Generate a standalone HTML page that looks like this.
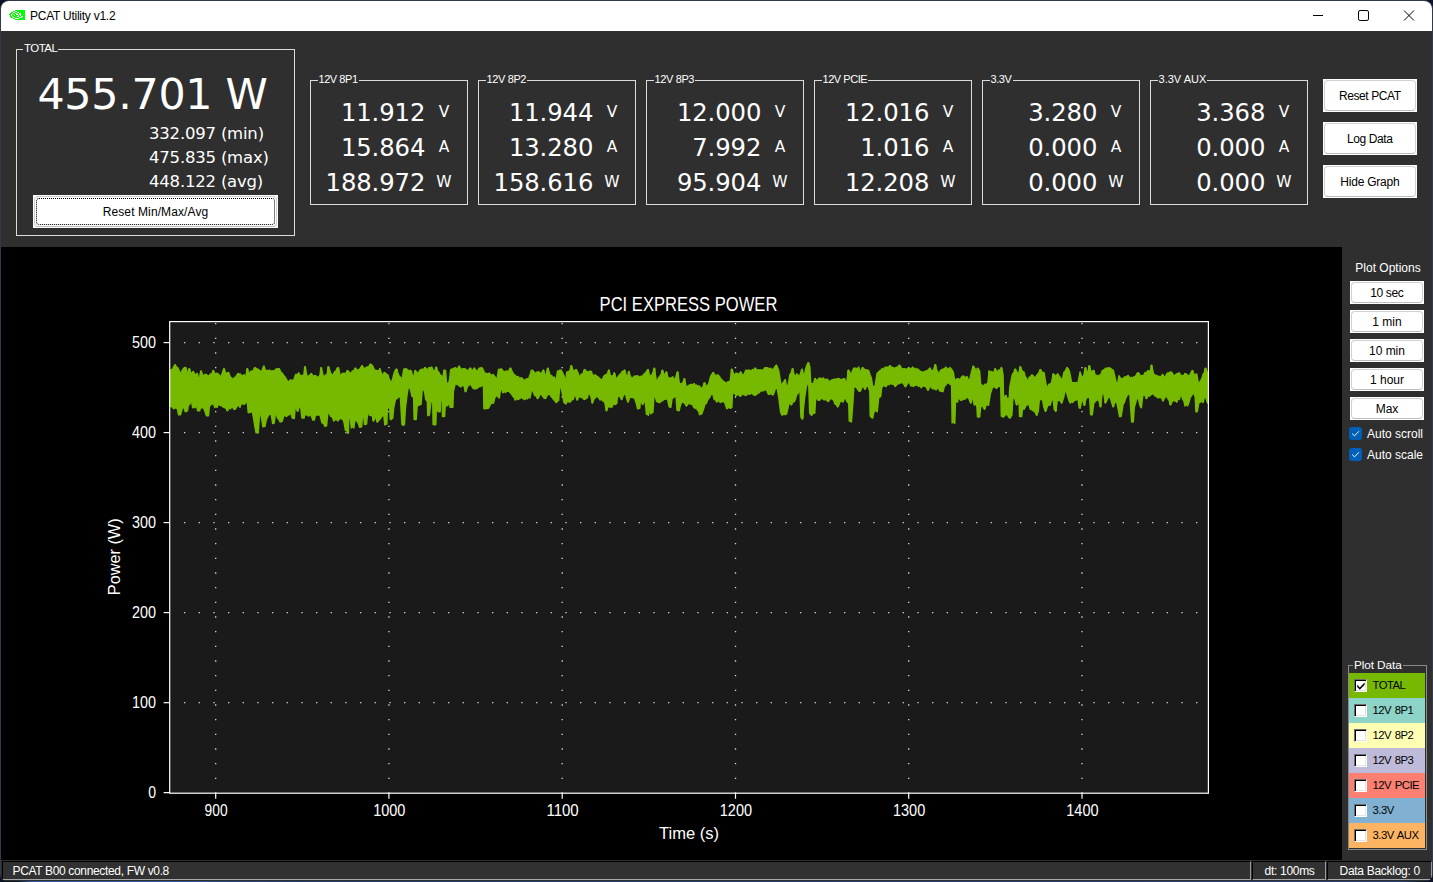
<!DOCTYPE html>
<html lang="en"><head><meta charset="utf-8"><title>PCAT Utility v1.2</title>
<style>
*{box-sizing:border-box;margin:0;padding:0}
html,body{width:1433px;height:882px;overflow:hidden;background:#0b1426}
body{position:relative;font-family:"Liberation Sans",sans-serif;font-size:12px;color:#fff}
#frame{position:absolute;left:0;top:0;width:1433px;height:881.3px;background:#323a4a;border-radius:9px 9px 7px 7px}
#win{position:absolute;left:1.2px;top:0.8px;width:1430.6px;height:880.2px;background:#2f2f2f;border-radius:8px 8px 6px 6px;overflow:hidden}
#in{position:absolute;left:-0.2px;top:0.2px;width:1431px;height:880px}
#tb{position:absolute;left:0;top:0;width:1431px;height:30px;background:#fff;color:#000}
#tb .t{position:absolute;left:29px;top:7px;font-size:12px;line-height:16px;white-space:nowrap}
.abs{position:absolute}
.gb{position:absolute;border:1px solid #dcdcdc}
.gb .lg{position:absolute;left:6.5px;top:-8.5px;height:14px;line-height:14px;font-size:11px;background:#2f2f2f;padding:0 1px;white-space:nowrap;letter-spacing:-0.3px;color:#fff}
.num{position:absolute;font-family:"DejaVu Sans",sans-serif;white-space:nowrap;text-align:right;color:#fff}
.btn{position:absolute;background:#fff;color:#000;text-align:center;white-space:nowrap;font-size:12px}
.btn i{position:absolute;left:1px;top:1px;right:1px;bottom:1px;border:1px solid #d0d0d0;border-bottom-color:#bdbdbd;border-radius:4px;display:block}
.btn span{position:relative}
#plotbg{position:absolute;left:0;top:246px;width:1341px;height:613px;background:#000}
.cb{position:absolute;width:13px;height:13px;background:#005fb8;border-radius:3px}
.row{position:absolute;left:1348px;width:76px;height:25px;color:#000;font-size:11.3px;letter-spacing:-0.5px}
.row b{position:absolute;left:5px;top:6px;width:13px;height:13px;background:#fff;border:1px solid;border-color:#6d6d6d #fff #fff #6d6d6d;box-shadow:inset 1px 1px 0 #000,inset -1px -1px 0 #e3e3e3}
.row span{word-spacing:1px;position:absolute;left:23.5px;top:5.5px;line-height:14px;font-weight:normal;white-space:nowrap}
#sb{position:absolute;left:0;top:859px;width:1431px;height:21px;background:#2f2f2f}
#sb div{position:absolute;top:1px;height:19px;line-height:16px;font-size:12px;white-space:nowrap;color:#fff;background:#313131;border:1px solid #000;border-right-color:#9a9a9a;border-bottom-color:#a8a8a8;padding-top:1px}
</style></head>
<body>
<div id="frame"></div><div style="position:absolute;left:0;top:881px;width:1433px;height:1px;background:linear-gradient(90deg,#0b1426 0,#0b1426 18px,#2b5aa0 30px,#2b5aa0 160px,#1f3f74 300px,#24467c 1400px,#0b1426 1425px)"></div>
<div id="win"><div id="in">
<div id="tb">
<svg class="abs" style="left:8px;top:9px" width="16" height="10" viewBox="0 0 16 10" fill="#00ff00" shape-rendering="crispEdges"><rect x="6" y="0" width="10" height="1"/><rect x="4" y="1" width="2" height="1"/><rect x="8" y="1" width="8" height="1"/><rect x="2" y="2" width="2" height="1"/><rect x="6" y="2" width="2" height="1"/><rect x="10" y="2" width="6" height="1"/><rect x="1" y="3" width="2" height="1"/><rect x="4" y="3" width="2" height="1"/><rect x="8" y="3" width="2" height="1"/><rect x="12" y="3" width="4" height="1"/><rect x="0" y="4" width="2" height="1"/><rect x="3" y="4" width="1" height="1"/><rect x="5" y="4" width="2" height="1"/><rect x="9" y="4" width="1" height="1"/><rect x="12" y="4" width="4" height="1"/><rect x="1" y="5" width="1" height="1"/><rect x="3" y="5" width="2" height="1"/><rect x="6" y="5" width="3" height="1"/><rect x="10" y="5" width="1" height="1"/><rect x="12" y="5" width="4" height="1"/><rect x="1" y="6" width="2" height="1"/><rect x="4" y="6" width="4" height="1"/><rect x="10" y="6" width="2" height="1"/><rect x="14" y="6" width="2" height="1"/><rect x="2" y="7" width="2" height="1"/><rect x="6" y="7" width="4" height="1"/><rect x="13" y="7" width="3" height="1"/><rect x="4" y="8" width="2" height="1"/><rect x="10" y="8" width="6" height="1"/><rect x="6" y="9" width="10" height="1"/></svg>
<div class="t" style="letter-spacing:-0.25px">PCAT Utility v1.2</div>
<svg class="abs" style="left:1300px;top:0" width="131" height="30" viewBox="0 0 131 30" fill="none" stroke="#000" stroke-width="1"><path d="M12 14.5H22"/><rect x="57.5" y="9.5" width="10" height="10" rx="1.6"/><path d="M103 9.5L113 19.5M113 9.5L103 19.5"/></svg>
</div>
<div class="gb" style="left:15px;top:48px;width:279px;height:187px"><span class="lg" style="font-size:11.5px;left:6px;letter-spacing:-0.55px">TOTAL</span><div class="num" style="left:0;width:250.6px;top:19.3px;font-size:42.8px;line-height:50px;letter-spacing:-0.3px">455.701 W</div><div class="num" style="left:132px;text-align:left;top:74px;font-size:16.5px;line-height:20px;letter-spacing:-0.2px">332.097 (min)</div><div class="num" style="left:132px;text-align:left;top:98px;font-size:16.5px;line-height:20px;letter-spacing:-0.2px">475.835 (max)</div><div class="num" style="left:132px;text-align:left;top:122px;font-size:16.5px;line-height:20px;letter-spacing:-0.2px">448.122 (avg)</div></div>
<div class="btn" style="left:32px;top:194px;width:245px;height:33px;line-height:33px"><i></i><i style="left:3px;top:3px;right:3px;bottom:3px;border:1px dotted #000;border-radius:3px"></i><span style="top:1px;letter-spacing:0.1px">Reset Min/Max/Avg</span></div>
<div class="gb" style="left:309px;top:79px;width:158px;height:125px"><span class="lg" style="letter-spacing:-0.44px">12V 8P1</span><div class="num" style="right:41.7px;top:17.7px;font-size:24.3px;line-height:28px;letter-spacing:-0.1px">11.912</div><div class="num" style="left:118px;width:30px;text-align:center;top:21px;font-size:15.5px;line-height:20px">V</div><div class="num" style="right:41.7px;top:52.7px;font-size:24.3px;line-height:28px;letter-spacing:-0.1px">15.864</div><div class="num" style="left:118px;width:30px;text-align:center;top:56px;font-size:15.5px;line-height:20px">A</div><div class="num" style="right:41.7px;top:87.7px;font-size:24.3px;line-height:28px;letter-spacing:-0.1px">188.972</div><div class="num" style="left:118px;width:30px;text-align:center;top:91px;font-size:15.5px;line-height:20px">W</div></div>
<div class="gb" style="left:477px;top:79px;width:158px;height:125px"><span class="lg" style="letter-spacing:-0.37px">12V 8P2</span><div class="num" style="right:41.7px;top:17.7px;font-size:24.3px;line-height:28px;letter-spacing:-0.1px">11.944</div><div class="num" style="left:118px;width:30px;text-align:center;top:21px;font-size:15.5px;line-height:20px">V</div><div class="num" style="right:41.7px;top:52.7px;font-size:24.3px;line-height:28px;letter-spacing:-0.1px">13.280</div><div class="num" style="left:118px;width:30px;text-align:center;top:56px;font-size:15.5px;line-height:20px">A</div><div class="num" style="right:41.7px;top:87.7px;font-size:24.3px;line-height:28px;letter-spacing:-0.1px">158.616</div><div class="num" style="left:118px;width:30px;text-align:center;top:91px;font-size:15.5px;line-height:20px">W</div></div>
<div class="gb" style="left:645px;top:79px;width:158px;height:125px"><span class="lg" style="letter-spacing:-0.37px">12V 8P3</span><div class="num" style="right:41.7px;top:17.7px;font-size:24.3px;line-height:28px;letter-spacing:-0.1px">12.000</div><div class="num" style="left:118px;width:30px;text-align:center;top:21px;font-size:15.5px;line-height:20px">V</div><div class="num" style="right:41.7px;top:52.7px;font-size:24.3px;line-height:28px;letter-spacing:-0.1px">7.992</div><div class="num" style="left:118px;width:30px;text-align:center;top:56px;font-size:15.5px;line-height:20px">A</div><div class="num" style="right:41.7px;top:87.7px;font-size:24.3px;line-height:28px;letter-spacing:-0.1px">95.904</div><div class="num" style="left:118px;width:30px;text-align:center;top:91px;font-size:15.5px;line-height:20px">W</div></div>
<div class="gb" style="left:813px;top:79px;width:158px;height:125px"><span class="lg" style="letter-spacing:-0.46px">12V PCIE</span><div class="num" style="right:41.7px;top:17.7px;font-size:24.3px;line-height:28px;letter-spacing:-0.1px">12.016</div><div class="num" style="left:118px;width:30px;text-align:center;top:21px;font-size:15.5px;line-height:20px">V</div><div class="num" style="right:41.7px;top:52.7px;font-size:24.3px;line-height:28px;letter-spacing:-0.1px">1.016</div><div class="num" style="left:118px;width:30px;text-align:center;top:56px;font-size:15.5px;line-height:20px">A</div><div class="num" style="right:41.7px;top:87.7px;font-size:24.3px;line-height:28px;letter-spacing:-0.1px">12.208</div><div class="num" style="left:118px;width:30px;text-align:center;top:91px;font-size:15.5px;line-height:20px">W</div></div>
<div class="gb" style="left:981px;top:79px;width:158px;height:125px"><span class="lg" style="letter-spacing:-0.41px">3.3V</span><div class="num" style="right:41.7px;top:17.7px;font-size:24.3px;line-height:28px;letter-spacing:-0.1px">3.280</div><div class="num" style="left:118px;width:30px;text-align:center;top:21px;font-size:15.5px;line-height:20px">V</div><div class="num" style="right:41.7px;top:52.7px;font-size:24.3px;line-height:28px;letter-spacing:-0.1px">0.000</div><div class="num" style="left:118px;width:30px;text-align:center;top:56px;font-size:15.5px;line-height:20px">A</div><div class="num" style="right:41.7px;top:87.7px;font-size:24.3px;line-height:28px;letter-spacing:-0.1px">0.000</div><div class="num" style="left:118px;width:30px;text-align:center;top:91px;font-size:15.5px;line-height:20px">W</div></div>
<div class="gb" style="left:1149px;top:79px;width:158px;height:125px"><span class="lg" style="letter-spacing:0.02px">3.3V AUX</span><div class="num" style="right:41.7px;top:17.7px;font-size:24.3px;line-height:28px;letter-spacing:-0.1px">3.368</div><div class="num" style="left:118px;width:30px;text-align:center;top:21px;font-size:15.5px;line-height:20px">V</div><div class="num" style="right:41.7px;top:52.7px;font-size:24.3px;line-height:28px;letter-spacing:-0.1px">0.000</div><div class="num" style="left:118px;width:30px;text-align:center;top:56px;font-size:15.5px;line-height:20px">A</div><div class="num" style="right:41.7px;top:87.7px;font-size:24.3px;line-height:28px;letter-spacing:-0.1px">0.000</div><div class="num" style="left:118px;width:30px;text-align:center;top:91px;font-size:15.5px;line-height:20px">W</div></div>
<div class="btn" style="left:1322px;top:78px;width:94px;height:33px;line-height:33px;font-size:12px"><i></i><span style="letter-spacing:-0.4px;margin-right:0.4px;top:1px">Reset PCAT</span></div>
<div class="btn" style="left:1322px;top:121px;width:94px;height:33px;line-height:33px;font-size:12px"><i></i><span style="letter-spacing:-0.39px;margin-right:0.39px;top:1px">Log Data</span></div>
<div class="btn" style="left:1322px;top:164px;width:94px;height:33px;line-height:33px;font-size:12px"><i></i><span style="letter-spacing:-0.23px;margin-right:0.23px;top:1px">Hide Graph</span></div>
<div id="plotbg"></div>
<svg class="abs" style="left:-1px;top:-1px" width="1433" height="882" viewBox="0 0 1433 882" font-family="'Liberation Sans',sans-serif" fill="#fff"><rect x="169.5" y="321.5" width="1039" height="471.7" fill="#1a1a1a"/><g stroke="#d8d8d8" stroke-width="1.3" stroke-dasharray="1.3 13.367" fill="none"><path d="M184.0 702.7H1208"/><path d="M184.0 612.6H1208"/><path d="M184.0 522.6H1208"/><path d="M184.0 432.6H1208"/><path d="M184.0 342.6H1208"/><path d="M215.7 323V793"/><path d="M388.9 323V793"/><path d="M562.2 323V793"/><path d="M735.5 323V793"/><path d="M908.7 323V793"/><path d="M1082.0 323V793"/></g><path d="M170.3,370.2 L170.3,370.2 L171.5,369.7 L172.7,369.2 L173.9,366.5 L175.1,364.8 L176.4,367.2 L177.6,367.7 L178.8,369.9 L180.0,373.6 L181.2,372.5 L182.3,370.4 L183.4,368.7 L184.7,367.5 L185.9,367.7 L187.4,374.6 L189.3,368.7 L191.3,374.6 L193.2,371.6 L195.2,375.5 L197.1,373.6 L198.6,380.4 L199.8,376.3 L201.0,371.1 L203.0,376.5 L204.9,374.6 L206.4,374.5 L207.9,376.0 L209.2,375.7 L210.5,374.0 L211.8,374.1 L213.2,370.6 L215.2,374.6 L216.4,373.4 L217.6,373.6 L218.9,374.7 L220.2,376.6 L221.5,376.0 L222.8,371.8 L224.0,368.7 L225.9,374.1 L227.2,373.1 L228.4,372.6 L230.3,377.0 L231.6,378.2 L232.9,379.4 L234.2,378.0 L235.6,377.2 L236.9,375.3 L238.2,373.6 L240.1,376.5 L240.0,374.1 L242.0,376.5 L243.9,375.0 L245.4,378.9 L247.3,368.7 L248.5,372.7 L249.8,373.1 L251.0,371.3 L252.2,371.1 L253.4,370.9 L254.7,367.7 L256.1,368.4 L257.6,369.2 L258.7,369.8 L259.9,370.9 L261.0,372.6 L262.5,369.4 L263.9,366.2 L265.2,370.1 L266.4,371.1 L267.5,370.4 L268.7,371.2 L269.8,370.2 L270.9,371.4 L272.1,370.9 L273.2,371.1 L274.4,371.3 L275.6,369.4 L276.7,368.9 L277.9,368.9 L279.1,368.7 L280.5,371.9 L282.0,373.1 L283.5,375.3 L284.9,377.0 L286.4,379.4 L287.9,381.9 L289.1,381.6 L290.3,379.9 L291.5,380.5 L292.6,380.2 L293.7,380.4 L295.7,374.6 L297.2,375.1 L298.6,373.1 L300.1,375.6 L301.5,376.0 L302.8,375.3 L304.0,375.0 L305.0,366.7 L306.9,376.5 L308.4,376.2 L309.9,375.1 L311.3,373.6 L312.6,375.8 L313.9,376.0 L315.2,375.5 L316.7,376.7 L318.2,378.0 L320.1,375.0 L321.1,367.7 L323.0,375.5 L324.3,377.4 L325.6,375.0 L327.0,375.5 L328.4,366.7 L330.4,372.6 L332.3,376.0 L333.5,374.1 L334.8,371.6 L335.9,371.5 L337.0,368.5 L338.2,367.7 L340.1,375.5 L341.3,375.3 L342.4,373.4 L343.6,373.6 L344.9,373.6 L346.2,372.9 L347.5,370.6 L348.8,372.0 L350.1,373.5 L351.4,372.6 L352.7,371.1 L354.0,370.7 L355.3,368.2 L356.7,369.9 L358.2,370.2 L359.5,369.4 L360.8,367.6 L362.1,365.8 L363.4,367.9 L364.7,368.8 L366.0,367.7 L367.5,367.0 L369.0,366.4 L370.4,364.3 L371.6,364.8 L372.9,366.7 L374.3,369.8 L375.8,370.6 L377.2,370.9 L378.6,371.2 L380.0,368.7 L380.0,369.2 L382.0,375.0 L383.2,375.2 L384.4,372.6 L385.5,373.3 L386.7,374.4 L387.8,375.0 L389.8,380.9 L391.0,381.9 L392.2,380.9 L394.2,373.1 L395.4,370.3 L396.6,369.2 L397.8,373.0 L399.1,376.0 L400.5,377.5 L402.0,379.9 L403.9,369.2 L405.2,368.9 L406.5,369.1 L407.8,370.2 L409.0,371.7 L410.1,370.3 L411.3,371.1 L413.2,378.9 L415.2,370.6 L416.4,372.1 L417.6,374.1 L418.8,372.3 L420.1,370.2 L422.0,369.2 L423.5,370.0 L424.9,367.7 L426.2,368.7 L427.4,371.1 L428.8,367.7 L430.3,367.8 L431.8,367.2 L433.7,372.1 L435.0,370.3 L436.2,367.2 L437.4,371.2 L438.6,372.1 L440.1,375.2 L441.5,375.5 L442.5,383.8 L444.0,370.2 L445.5,370.6 L446.4,382.9 L447.9,383.6 L449.4,381.4 L450.8,369.7 L452.0,369.1 L453.1,369.0 L454.2,368.2 L455.5,367.8 L456.7,368.8 L457.9,368.5 L459.1,366.2 L461.1,370.2 L462.6,368.9 L464.0,368.7 L465.3,369.1 L466.6,370.1 L467.9,371.1 L469.1,369.4 L470.4,368.2 L472.3,371.1 L474.3,368.2 L475.5,370.1 L476.7,371.1 L477.9,370.4 L479.2,368.2 L480.3,368.2 L481.4,367.6 L482.6,368.7 L483.8,371.4 L485.0,373.6 L486.5,373.5 L488.0,373.9 L489.4,373.1 L490.7,375.3 L492.0,375.1 L493.3,374.6 L494.6,376.6 L495.9,378.3 L497.2,378.9 L498.7,369.2 L499.8,370.3 L501.0,368.8 L502.1,369.7 L503.4,371.8 L504.7,371.9 L506.0,371.1 L507.5,371.7 L509.0,370.5 L510.4,368.2 L511.6,370.5 L512.7,372.7 L513.8,374.6 L515.1,375.2 L516.3,377.0 L518.2,376.5 L520.0,380.9 L520.0,378.0 L522.0,378.0 L523.4,380.1 L524.9,380.4 L526.2,379.2 L527.5,378.7 L528.8,378.9 L530.3,374.2 L531.7,370.2 L533.0,370.8 L534.3,372.5 L535.6,373.6 L537.1,372.1 L538.6,372.1 L539.8,372.7 L541.0,375.0 L542.2,372.1 L543.4,370.2 L545.4,378.0 L546.6,372.5 L547.8,368.2 L549.1,372.2 L550.3,376.0 L551.6,375.5 L552.9,378.2 L554.2,377.0 L555.7,382.9 L557.6,371.1 L558.8,371.6 L559.9,370.0 L561.0,370.2 L562.5,372.9 L564.0,376.0 L565.4,383.8 L566.9,372.1 L568.4,371.7 L569.8,371.1 L571.3,365.8 L573.2,371.1 L574.7,370.5 L576.2,369.7 L577.6,372.3 L579.1,376.0 L580.3,376.5 L581.5,374.1 L583.0,373.7 L584.5,369.7 L585.8,370.9 L587.1,371.7 L588.4,372.1 L589.9,371.2 L591.3,371.6 L592.8,376.5 L594.0,375.2 L595.2,375.0 L596.5,376.1 L597.8,376.8 L599.1,378.0 L601.1,379.9 L602.6,379.4 L604.0,376.0 L605.5,374.8 L607.0,374.6 L608.9,370.2 L610.9,378.5 L612.0,375.8 L613.1,376.6 L614.3,373.1 L615.5,377.1 L616.7,379.9 L618.2,376.7 L619.7,374.6 L620.9,374.1 L622.1,371.5 L623.3,371.8 L624.5,370.2 L626.5,376.5 L627.7,375.9 L628.9,371.6 L630.2,376.3 L631.4,378.0 L632.7,378.4 L634.0,376.5 L635.3,376.0 L636.5,376.3 L637.7,375.8 L638.9,377.6 L640.2,376.5 L641.4,376.4 L642.6,376.3 L643.8,374.3 L645.1,373.6 L646.5,371.3 L648.0,369.7 L649.2,374.5 L650.4,376.5 L651.7,375.6 L653.0,372.5 L654.3,368.2 L656.3,381.4 L657.5,380.8 L658.7,377.5 L660.0,377.0 L660.0,376.0 L661.2,374.5 L662.4,370.2 L664.4,376.0 L666.4,372.1 L667.6,376.7 L668.8,378.9 L670.1,378.0 L671.4,378.2 L672.7,377.0 L674.7,380.9 L676.1,376.6 L677.6,372.1 L679.5,384.8 L681.0,383.5 L682.5,383.8 L684.4,378.9 L686.4,388.7 L687.8,386.2 L689.3,385.3 L690.5,384.8 L691.8,384.4 L693.0,385.2 L694.2,383.8 L695.4,386.1 L696.6,385.2 L697.9,387.0 L699.1,385.8 L700.4,388.0 L701.7,388.2 L703.0,386.8 L704.5,382.9 L706.4,386.8 L707.6,385.4 L708.8,383.8 L710.8,376.5 L712.0,374.3 L713.2,372.6 L715.2,376.0 L716.7,375.3 L718.1,375.0 L719.6,376.9 L721.1,379.4 L722.2,379.9 L723.3,381.9 L724.5,381.9 L725.7,383.3 L726.8,382.9 L728.0,381.7 L729.2,382.0 L730.3,380.9 L731.8,369.2 L733.8,374.6 L734.9,375.6 L736.0,373.2 L737.2,373.6 L738.3,374.0 L739.5,374.2 L740.6,372.1 L741.7,374.2 L742.9,374.9 L744.0,374.6 L746.0,370.2 L747.3,370.8 L748.6,370.1 L749.9,370.6 L751.2,371.3 L752.6,369.5 L753.9,370.2 L755.3,368.2 L756.7,370.7 L758.2,369.7 L759.7,370.2 L761.0,369.8 L762.3,370.7 L763.7,369.5 L765.0,367.7 L766.5,367.8 L768.0,368.1 L769.4,369.2 L770.6,368.3 L771.9,370.1 L773.1,369.4 L774.3,367.7 L776.3,365.3 L777.5,367.7 L778.7,371.1 L780.7,383.8 L781.9,384.8 L783.1,382.9 L785.1,379.9 L787.0,388.7 L788.5,383.7 L789.9,375.0 L791.3,372.8 L792.6,368.7 L793.7,373.4 L794.8,378.0 L796.8,374.1 L798.4,375.7 L800.0,376.0 L800.0,375.0 L802.0,369.2 L803.9,378.0 L805.9,368.2 L807.1,365.0 L808.3,362.8 L809.8,367.2 L810.7,383.8 L812.0,383.5 L813.2,384.8 L815.1,378.5 L816.4,381.0 L817.6,379.9 L819.5,378.0 L820.8,378.9 L822.1,378.5 L823.4,378.0 L824.7,380.2 L826.1,379.3 L827.4,379.4 L828.7,381.3 L830.0,381.5 L831.3,380.4 L832.4,379.8 L833.5,379.6 L834.7,379.4 L835.8,378.9 L837.0,379.5 L838.1,378.5 L839.4,378.8 L840.7,379.7 L842.0,379.9 L843.2,378.9 L844.5,378.9 L845.7,382.1 L846.9,381.9 L848.4,370.2 L849.8,372.1 L850.3,384.8 L851.3,374.1 L852.5,371.2 L853.7,368.2 L855.0,368.3 L856.2,368.4 L857.4,369.1 L858.6,367.2 L860.6,373.1 L862.5,367.7 L863.7,368.5 L864.9,370.4 L866.0,369.7 L867.2,370.3 L868.4,370.2 L869.9,374.6 L871.3,378.0 L872.8,388.7 L874.0,386.4 L875.2,385.8 L877.2,373.1 L878.5,372.4 L879.8,370.7 L881.1,370.2 L882.3,368.5 L883.5,370.0 L884.8,367.5 L886.0,367.2 L887.3,367.2 L888.6,367.4 L889.9,365.8 L891.2,367.2 L892.5,367.4 L893.8,368.2 L895.1,368.0 L896.5,367.4 L897.8,367.3 L899.2,365.3 L900.3,366.0 L901.4,368.5 L902.6,369.2 L903.8,368.8 L904.9,368.7 L906.1,369.9 L907.3,368.9 L908.4,368.2 L909.9,368.5 L911.4,368.8 L912.8,367.2 L914.2,369.4 L915.5,368.5 L916.9,369.5 L918.2,369.2 L919.4,370.9 L920.7,371.6 L922.0,372.0 L923.3,372.4 L924.7,371.6 L926.0,371.1 L927.3,370.7 L928.6,369.6 L929.9,368.2 L931.1,370.6 L932.2,370.6 L933.4,370.2 L935.3,364.8 L936.5,370.0 L937.8,372.1 L938.9,374.6 L940.0,373.6 L940.0,371.1 L941.5,370.0 L942.9,369.2 L944.4,368.9 L945.9,367.2 L947.2,369.1 L948.5,369.0 L949.8,367.7 L950.9,368.7 L952.0,370.1 L953.2,372.1 L954.5,379.9 L955.8,379.8 L957.1,378.9 L958.3,378.7 L959.5,379.9 L960.8,378.4 L962.1,376.6 L963.4,376.0 L964.6,377.2 L965.7,377.6 L966.9,376.5 L968.8,381.4 L970.0,378.8 L971.3,373.1 L973.2,366.2 L975.2,369.2 L976.1,375.0 L977.6,368.2 L979.6,371.1 L980.5,383.8 L981.8,385.1 L983.0,387.3 L984.9,384.3 L986.4,384.7 L987.9,382.9 L989.3,371.1 L990.5,372.6 L991.6,371.6 L992.8,372.6 L994.0,372.2 L995.2,368.7 L996.4,372.0 L997.6,371.6 L998.9,370.0 L1000.1,370.8 L1001.4,367.7 L1003.0,375.0 L1003.5,401.4 L1005.7,395.6 L1007.4,399.5 L1009.4,397.5 L1009.9,386.8 L1011.1,381.1 L1012.3,375.0 L1013.8,372.6 L1015.2,369.2 L1017.2,372.6 L1018.2,376.5 L1020.3,366.7 L1022.1,371.1 L1024.0,372.1 L1025.2,376.9 L1026.5,378.0 L1027.7,384.3 L1029.4,377.0 L1030.6,377.4 L1031.8,375.0 L1033.0,375.6 L1034.1,377.3 L1035.3,378.0 L1037.2,375.0 L1038.8,372.9 L1040.4,369.7 L1042.6,373.1 L1044.0,372.6 L1046.0,384.8 L1047.0,389.2 L1048.9,384.3 L1050.2,383.9 L1051.4,383.3 L1053.3,374.1 L1054.5,374.9 L1055.8,376.5 L1057.7,374.1 L1059.2,376.3 L1060.7,378.5 L1062.1,380.9 L1064.1,372.1 L1065.5,371.0 L1067.0,367.7 L1068.2,368.8 L1069.4,371.6 L1071.4,381.9 L1072.5,382.9 L1073.7,382.9 L1074.8,382.9 L1076.3,382.5 L1077.8,383.8 L1078.9,378.5 L1080.0,373.1 L1080.0,372.1 L1081.5,376.4 L1082.9,378.9 L1084.2,373.9 L1085.4,367.7 L1087.3,375.0 L1089.3,365.8 L1091.2,373.1 L1092.5,371.1 L1093.7,370.6 L1095.1,374.9 L1096.6,375.5 L1098.1,376.6 L1099.5,375.0 L1100.8,375.2 L1102.1,371.2 L1103.4,370.2 L1104.7,369.4 L1105.9,368.1 L1107.1,369.6 L1108.3,367.7 L1109.6,368.2 L1110.8,368.4 L1112.0,369.8 L1113.2,370.2 L1115.2,378.5 L1117.1,386.8 L1119.1,376.0 L1120.4,378.5 L1121.7,379.0 L1123.0,378.5 L1124.2,377.6 L1125.4,376.5 L1126.7,377.9 L1127.9,375.5 L1129.1,377.1 L1130.3,378.3 L1131.5,377.4 L1132.8,378.9 L1134.0,376.7 L1135.2,377.0 L1136.4,374.8 L1137.6,373.1 L1138.9,373.0 L1140.1,376.0 L1141.3,375.8 L1142.5,375.5 L1143.7,375.8 L1145.0,372.7 L1146.2,373.7 L1147.4,371.1 L1148.9,370.9 L1150.3,372.1 L1151.5,365.3 L1153.3,373.1 L1154.5,375.5 L1155.7,375.2 L1156.9,375.7 L1158.2,376.5 L1159.6,376.5 L1161.1,376.9 L1162.6,374.6 L1163.8,376.4 L1165.0,378.5 L1166.2,375.2 L1167.4,373.1 L1168.7,373.3 L1170.0,372.2 L1171.3,372.1 L1172.6,373.7 L1173.8,376.5 L1175.1,375.2 L1176.5,374.0 L1177.8,373.6 L1179.2,373.1 L1180.4,374.8 L1181.6,376.5 L1182.7,375.5 L1183.9,375.8 L1185.0,373.6 L1186.5,374.3 L1188.0,375.7 L1189.4,376.0 L1190.9,372.9 L1192.4,370.6 L1194.3,375.0 L1195.5,374.6 L1196.7,374.1 L1198.7,385.8 L1199.8,382.3 L1201.0,380.4 L1202.1,378.0 L1203.3,373.9 L1204.4,372.6 L1205.5,368.2 L1207.5,373.1 L1207.9,373.1 L1207.9,402.9 L1207.5,402.9 L1206.0,397.7 L1204.6,395.5 L1203.1,402.4 L1201.6,400.9 L1200.2,402.1 L1198.7,402.9 L1197.2,411.7 L1196.0,411.7 L1195.3,397.5 L1193.8,391.1 L1192.6,394.2 L1191.4,395.5 L1190.1,397.7 L1188.8,402.6 L1187.5,405.8 L1186.2,404.3 L1185.0,405.8 L1183.9,400.7 L1182.7,399.1 L1181.6,395.0 L1180.4,395.6 L1179.2,399.4 L1177.9,398.6 L1176.7,401.9 L1175.4,400.6 L1174.1,400.7 L1172.8,399.9 L1171.6,402.7 L1170.4,404.8 L1169.2,400.3 L1168.1,398.9 L1167.0,396.0 L1165.6,396.8 L1164.3,398.2 L1163.0,400.9 L1161.7,397.7 L1160.4,397.2 L1159.1,397.5 L1157.8,397.8 L1156.5,396.4 L1155.2,396.0 L1153.8,393.7 L1152.3,394.1 L1151.1,394.1 L1150.0,395.8 L1148.8,396.1 L1147.6,395.5 L1146.4,398.5 L1145.3,395.6 L1144.2,395.3 L1143.0,393.6 L1141.1,407.7 L1139.9,405.2 L1138.8,399.5 L1137.6,397.5 L1136.5,399.3 L1135.4,403.3 L1134.2,407.3 L1133.2,421.9 L1131.8,421.9 L1130.8,409.2 L1129.8,391.6 L1128.4,394.2 L1126.9,395.5 L1125.6,398.3 L1124.3,402.3 L1123.0,404.3 L1121.0,416.5 L1119.6,416.5 L1118.1,408.2 L1116.6,401.4 L1115.5,402.0 L1114.4,402.8 L1113.2,406.8 L1111.9,403.1 L1110.6,398.4 L1109.3,396.5 L1108.0,397.7 L1106.7,400.4 L1105.4,402.9 L1104.2,395.7 L1103.0,389.7 L1101.7,396.2 L1100.5,406.8 L1099.1,401.0 L1097.6,399.0 L1096.3,400.5 L1095.0,401.7 L1093.7,403.3 L1092.2,414.6 L1090.7,414.6 L1089.8,398.5 L1088.3,396.6 L1086.8,397.5 L1085.6,399.6 L1084.4,405.3 L1083.2,401.1 L1082.0,399.4 L1080.0,408.2 L1080.0,407.7 L1079.2,407.7 L1078.2,399.9 L1076.8,399.4 L1075.3,400.0 L1073.8,400.9 L1072.7,402.3 L1071.6,400.8 L1070.4,402.9 L1069.0,400.4 L1067.0,393.6 L1065.1,389.2 L1063.6,397.5 L1061.6,402.9 L1059.7,399.9 L1058.5,400.5 L1057.2,400.4 L1055.8,411.2 L1054.3,409.2 L1053.3,399.0 L1051.4,400.4 L1049.9,405.3 L1048.7,403.7 L1047.5,406.3 L1045.5,411.2 L1044.0,407.3 L1042.6,399.4 L1041.4,399.3 L1040.3,399.4 L1039.2,400.4 L1038.2,411.2 L1036.7,415.1 L1035.3,412.1 L1034.0,411.4 L1032.8,410.2 L1031.6,409.6 L1030.4,409.2 L1028.9,403.8 L1027.4,404.7 L1026.0,405.3 L1024.0,409.2 L1022.6,406.3 L1021.6,416.5 L1019.6,416.5 L1019.1,395.5 L1018.2,403.3 L1016.7,404.8 L1014.7,398.0 L1012.8,397.5 L1011.8,415.1 L1009.9,418.0 L1008.6,416.9 L1007.4,414.1 L1006.2,414.6 L1005.0,415.1 L1003.5,417.0 L1001.4,416.0 L1000.8,386.7 L998.6,385.8 L996.7,388.2 L995.2,387.5 L993.7,386.2 L992.3,387.7 L990.3,393.6 L988.4,405.3 L986.4,404.3 L984.5,409.2 L982.5,405.3 L980.5,407.3 L979.6,417.0 L977.6,417.0 L976.9,406.3 L975.6,403.7 L974.2,404.8 L972.7,395.5 L970.8,402.9 L969.3,399.4 L967.8,397.1 L966.4,397.5 L965.2,398.9 L964.0,399.0 L962.9,399.4 L961.7,400.2 L960.5,399.9 L959.3,397.8 L958.1,397.5 L957.6,401.9 L955.4,401.4 L954.7,423.4 L953.4,420.9 L952.2,422.9 L951.7,385.3 L950.3,384.3 L949.0,383.2 L947.8,382.8 L946.7,383.1 L945.5,385.5 L944.4,385.8 L942.9,391.6 L941.5,391.2 L940.0,390.6 L940.0,391.1 L938.7,388.4 L937.4,387.8 L936.1,389.9 L934.8,388.7 L933.6,388.7 L932.4,388.6 L931.2,386.5 L929.9,386.7 L928.0,390.2 L926.0,386.7 L924.8,386.1 L923.6,385.8 L922.4,386.1 L921.1,387.7 L919.8,385.2 L918.5,386.3 L917.2,384.8 L915.9,385.1 L914.6,385.2 L913.3,386.3 L912.2,383.9 L911.0,386.0 L909.8,383.2 L908.6,381.9 L907.5,383.3 L905.5,386.7 L903.6,383.8 L902.3,382.5 L901.0,382.5 L899.7,383.3 L898.2,383.8 L896.7,384.4 L895.3,386.3 L893.8,384.2 L892.3,384.2 L890.9,382.8 L889.6,384.4 L888.4,384.4 L887.2,384.4 L886.0,386.7 L884.5,385.6 L883.0,385.5 L881.6,387.7 L880.6,396.5 L878.6,397.5 L877.2,411.7 L875.7,410.3 L874.2,411.2 L872.3,418.0 L870.3,416.0 L869.9,391.6 L868.4,386.7 L867.2,385.6 L866.1,386.8 L865.0,389.2 L863.5,386.7 L862.4,386.5 L861.2,388.9 L860.1,391.1 L858.9,391.0 L857.8,389.6 L856.7,387.7 L855.2,386.2 L853.7,387.7 L852.8,403.3 L851.3,421.9 L849.3,420.9 L848.8,403.3 L846.9,401.4 L844.9,396.5 L843.0,401.9 L841.5,401.0 L840.1,401.4 L838.8,404.8 L837.6,406.8 L836.4,404.0 L835.2,404.3 L833.7,400.0 L832.2,399.0 L830.9,398.1 L829.6,399.6 L828.3,401.4 L827.1,400.5 L825.9,399.2 L824.7,399.8 L823.4,399.4 L822.2,397.6 L821.0,398.5 L819.5,400.1 L818.1,399.9 L816.9,398.4 L815.6,396.5 L814.7,413.1 L813.2,412.8 L811.7,415.1 L809.8,413.1 L808.8,383.8 L807.6,383.7 L806.4,385.8 L804.4,398.5 L802.4,419.0 L801.0,417.0 L800.0,388.7 L800.0,390.6 L798.9,391.4 L797.8,393.6 L796.5,394.7 L795.3,399.4 L794.0,402.0 L792.7,401.0 L791.4,404.8 L790.2,402.8 L789.0,403.3 L787.7,408.6 L786.5,414.1 L785.1,414.6 L783.6,414.0 L782.1,415.1 L780.7,412.1 L778.7,396.5 L777.2,387.7 L775.3,388.7 L773.3,394.6 L772.1,394.6 L770.9,392.3 L769.7,394.3 L768.4,394.1 L767.0,390.9 L765.5,388.7 L764.2,390.2 L762.9,390.7 L761.6,390.6 L760.3,391.3 L759.0,392.7 L757.7,393.1 L756.4,394.4 L755.1,395.3 L753.8,395.0 L752.5,393.7 L751.2,392.8 L749.9,394.1 L748.6,394.0 L747.3,393.7 L746.0,395.5 L744.0,394.6 L742.6,393.6 L741.1,395.5 L739.8,396.2 L738.5,393.9 L737.2,395.0 L736.0,395.4 L734.7,392.9 L733.5,392.6 L732.3,394.6 L731.8,407.3 L730.3,408.2 L729.2,407.1 L728.1,407.7 L726.9,408.7 L725.0,402.9 L723.8,401.3 L722.7,401.6 L721.5,401.4 L720.3,402.5 L719.1,400.7 L717.9,400.8 L716.7,401.9 L715.4,399.4 L714.2,399.4 L712.8,393.6 L710.8,394.6 L709.7,397.2 L708.5,398.5 L707.4,400.4 L706.2,403.5 L705.1,403.2 L704.0,407.3 L702.7,411.2 L701.5,414.1 L699.6,414.6 L698.6,410.7 L697.5,410.1 L696.3,406.9 L695.2,408.2 L693.9,407.4 L692.6,404.4 L691.3,404.3 L690.0,403.6 L688.8,403.3 L687.6,404.2 L686.4,405.8 L685.1,403.7 L683.8,402.6 L682.5,401.9 L681.3,402.6 L680.2,405.6 L679.1,410.7 L677.1,410.2 L676.1,396.5 L674.8,396.2 L673.5,397.8 L672.2,397.5 L670.7,407.3 L669.3,406.8 L667.8,399.9 L666.5,398.1 L665.2,399.3 L663.9,399.0 L662.6,400.7 L661.3,400.7 L660.0,402.4 L660.0,402.4 L658.4,402.3 L656.8,401.4 L655.3,396.7 L653.8,395.5 L652.9,412.1 L650.9,413.6 L649.9,403.3 L648.5,415.1 L646.5,414.1 L645.1,398.5 L643.8,402.2 L642.6,404.3 L640.7,396.5 L639.7,408.2 L637.7,408.7 L636.5,403.8 L635.3,399.9 L633.8,397.2 L632.4,397.6 L630.9,397.0 L629.4,397.9 L628.0,401.9 L626.7,398.6 L625.5,393.6 L624.2,394.0 L622.9,396.1 L621.6,399.4 L620.3,396.7 L619.0,396.4 L617.7,393.6 L616.7,403.3 L615.5,404.5 L614.4,404.0 L613.2,403.3 L612.0,406.9 L610.9,406.8 L609.6,407.0 L608.4,405.3 L606.5,410.7 L605.2,404.0 L604.0,400.4 L602.7,400.9 L601.4,398.3 L600.1,399.9 L599.0,397.9 L597.8,396.6 L596.7,396.0 L595.2,397.8 L593.8,399.3 L592.3,402.9 L590.8,395.5 L589.6,394.0 L588.4,392.6 L587.4,397.5 L585.9,398.5 L584.5,399.4 L583.3,398.7 L582.2,396.8 L581.1,397.5 L579.8,396.3 L578.5,397.0 L577.2,399.9 L575.9,396.4 L574.7,393.6 L573.2,399.4 L572.0,399.2 L570.8,401.4 L569.6,402.2 L568.4,401.2 L567.1,401.5 L565.9,403.8 L564.0,402.4 L562.0,391.6 L560.8,386.7 L559.6,385.8 L558.6,400.4 L557.4,401.3 L556.1,402.4 L554.8,400.5 L553.5,399.4 L552.2,397.5 L551.1,396.3 L550.0,394.5 L548.8,394.1 L547.7,394.6 L546.5,396.4 L545.4,398.5 L543.9,397.9 L542.5,395.7 L541.0,394.1 L539.9,394.0 L538.7,397.1 L537.6,398.5 L536.1,395.6 L534.7,395.5 L532.7,389.2 L531.2,391.6 L529.8,398.0 L528.5,396.9 L527.3,398.9 L526.1,397.1 L524.9,399.4 L523.7,398.9 L522.4,398.0 L521.2,397.4 L520.0,397.5 L520.0,398.5 L518.8,399.0 L517.7,399.5 L516.5,397.4 L515.3,399.9 L514.2,397.5 L513.0,396.3 L511.9,394.6 L510.4,392.7 L509.0,391.1 L507.8,391.2 L506.6,391.3 L505.4,392.5 L504.3,390.4 L503.1,392.6 L501.9,389.4 L500.7,388.2 L499.2,398.0 L497.7,396.0 L496.3,395.5 L494.8,397.5 L493.3,403.3 L491.9,402.4 L490.4,404.3 L488.4,408.2 L487.0,408.4 L485.5,408.5 L484.0,408.7 L483.6,386.7 L482.1,384.8 L480.6,386.4 L479.2,386.4 L477.7,387.7 L476.4,388.5 L475.1,388.7 L473.8,388.7 L472.6,387.7 L471.5,385.2 L470.4,384.3 L468.9,385.0 L467.4,386.7 L465.5,391.6 L464.0,385.8 L462.6,384.5 L461.1,386.7 L459.6,386.2 L458.2,384.8 L456.7,384.2 L455.2,383.3 L453.3,391.6 L452.8,407.3 L451.6,407.1 L450.3,407.3 L448.9,403.3 L446.9,405.8 L445.5,401.4 L444.5,416.5 L442.5,416.5 L442.5,400.4 L440.6,399.9 L440.1,411.7 L438.9,411.8 L437.6,410.7 L436.7,395.5 L435.7,424.4 L434.5,424.8 L433.2,424.4 L432.8,401.4 L430.8,402.4 L429.3,415.1 L427.9,415.6 L427.4,401.4 L425.9,399.4 L424.5,391.1 L423.2,388.8 L422.0,390.6 L421.0,404.3 L419.7,404.7 L418.4,405.4 L417.1,405.8 L416.1,419.5 L414.2,419.5 L413.7,396.5 L412.2,396.5 L410.3,388.7 L408.3,386.7 L406.9,395.3 L405.4,407.3 L404.4,424.4 L403.2,425.3 L402.0,424.4 L400.5,397.5 L399.3,396.6 L398.1,397.0 L396.9,398.8 L395.6,398.5 L393.7,407.3 L392.7,418.0 L390.7,419.5 L389.8,407.7 L388.5,407.6 L387.3,407.3 L386.8,423.9 L384.9,424.8 L383.9,415.1 L382.0,416.0 L380.0,419.0 L380.0,419.0 L378.6,420.3 L377.3,421.9 L375.3,416.0 L373.4,420.9 L372.4,415.6 L370.9,415.5 L369.4,415.1 L368.0,407.7 L366.5,423.9 L364.6,424.4 L363.1,407.7 L361.6,426.8 L359.7,427.3 L358.2,422.9 L357.1,421.2 L355.9,420.3 L354.8,419.5 L353.8,427.8 L352.6,426.3 L351.4,427.8 L350.4,419.0 L348.9,410.7 L348.0,433.1 L346.7,430.5 L345.5,430.2 L344.0,421.9 L342.8,418.3 L341.6,419.0 L340.3,417.6 L339.0,419.4 L337.7,420.9 L336.4,419.0 L335.1,419.6 L333.8,420.9 L332.3,416.6 L330.9,416.5 L329.4,413.3 L327.9,411.2 L326.5,425.8 L325.0,426.3 L323.5,423.0 L322.1,422.9 L320.1,415.1 L318.9,414.7 L317.7,414.9 L316.4,414.8 L315.2,416.0 L314.2,420.0 L312.8,420.0 L311.8,417.0 L310.7,414.5 L309.5,415.3 L308.4,416.0 L307.2,413.9 L306.1,415.0 L305.0,413.1 L304.0,418.0 L302.0,418.0 L300.6,405.8 L299.1,407.1 L297.6,411.2 L296.4,408.3 L295.2,406.3 L294.2,418.5 L292.3,418.0 L290.8,412.1 L289.3,414.5 L287.9,415.1 L286.4,416.4 L284.9,414.7 L283.5,416.5 L282.0,421.4 L280.1,421.9 L278.8,419.2 L277.6,418.0 L276.4,414.1 L275.2,413.6 L274.2,422.9 L272.7,423.4 L271.3,414.1 L270.0,414.3 L268.7,414.8 L267.4,417.0 L266.1,420.2 L264.9,426.3 L263.0,426.8 L261.0,413.6 L259.5,415.1 L258.1,432.7 L256.1,432.7 L254.7,424.8 L253.2,415.5 L251.7,408.7 L250.7,412.1 L249.5,412.3 L248.3,412.6 L247.3,400.4 L246.2,402.3 L245.0,403.5 L243.9,404.3 L242.6,403.0 L241.3,404.0 L240.0,406.3 L240.1,407.3 L238.6,405.1 L237.2,405.8 L235.2,409.2 L234.0,409.3 L232.8,407.0 L231.6,407.1 L230.3,408.7 L228.9,407.7 L227.4,410.7 L226.2,408.5 L225.0,407.6 L223.7,407.2 L222.5,406.3 L221.1,405.5 L219.6,405.1 L218.1,403.8 L217.2,407.3 L215.9,406.2 L214.7,407.3 L213.2,401.9 L211.9,404.3 L210.6,404.8 L209.3,406.3 L208.4,415.6 L206.4,415.6 L205.2,411.6 L204.0,408.7 L202.8,407.1 L201.7,407.9 L200.5,406.8 L199.6,410.7 L197.6,410.7 L196.1,400.4 L195.2,407.7 L193.9,407.1 L192.7,407.7 L191.8,402.4 L190.6,402.4 L189.5,404.4 L188.3,404.8 L187.4,410.7 L185.4,411.7 L183.9,407.3 L182.7,407.1 L181.5,410.7 L180.5,414.6 L178.6,414.6 L177.1,406.8 L176.0,408.2 L174.8,407.4 L173.7,408.7 L172.5,406.3 L171.4,406.7 L170.3,406.3 L170.3,406.3Z" fill="#76b900" stroke="#76b900" stroke-width="1.6" stroke-linejoin="round"/><path d="M175.1,365.4V370.7M189.3,369.3V376.1M193.2,372.2V377.0M197.1,374.2V381.9M201.0,371.7V381.9M204.9,375.2V378.0M213.2,371.2V376.1M224.0,369.3V377.5M228.4,373.2V378.5M238.2,374.2V379.5M240.0,374.7V378.0M243.9,375.6V380.4M247.3,369.3V380.4M254.7,368.3V372.6M263.9,366.8V374.1M279.1,369.3V374.6M298.6,373.7V377.5M305.0,367.3V378.0M311.3,374.2V378.0M321.1,368.3V377.0M328.4,367.3V377.0M338.2,368.3V377.0M347.5,371.2V375.1M355.3,368.8V374.1M362.1,366.4V371.7M370.4,364.9V369.2M384.4,373.2V376.5M396.6,369.8V377.5M415.2,371.2V380.4M424.9,368.3V372.6M436.2,367.8V373.6M459.1,366.8V371.7M464.0,369.3V372.6M470.4,368.8V372.6M474.3,368.8V372.6M510.4,368.8V376.1M531.7,370.8V380.4M538.6,372.7V376.5M543.4,370.8V379.5M547.8,368.8V379.5M571.3,366.4V372.6M576.2,370.3V377.5M584.5,370.3V375.6M595.2,375.6V379.5M608.9,370.8V380.0M614.3,373.7V381.4M624.5,370.8V378.0M628.9,372.2V379.5M648.0,370.3V378.0M654.3,368.8V382.9M662.4,370.8V377.5M666.4,372.7V380.4M672.7,377.6V382.4M677.6,372.7V386.3M684.4,379.5V390.2M694.2,384.4V387.3M704.5,383.5V388.3M713.2,373.2V378.0M731.8,369.8V382.4M740.6,372.7V376.1M755.3,368.8V372.1M765.0,368.3V371.7M776.3,365.9V372.6M785.1,380.5V390.2M792.6,369.3V379.5M796.8,374.7V379.5M802.0,369.8V379.5M808.3,363.4V369.7M815.1,379.1V386.3M838.1,379.1V381.9M848.4,370.8V383.4M862.5,368.3V374.6M889.9,366.4V369.7M899.2,365.9V370.7M929.9,368.8V372.6M935.3,365.4V373.6M973.2,366.8V374.6M977.6,368.8V376.5M989.3,371.7V384.4M995.2,369.3V374.1M1001.4,368.3V376.5M1005.7,396.2V402.9M1015.2,369.8V376.5M1020.3,367.3V378.0M1031.8,375.6V379.5M1040.4,370.3V376.5M1053.3,374.7V384.8M1057.7,374.7V380.0M1067.0,368.3V373.6M1085.4,368.3V380.4M1089.3,366.4V376.5M1093.7,371.2V377.0M1108.3,368.3V371.7M1119.1,376.6V388.3M1127.9,376.1V380.4M1137.6,373.7V380.4M1151.5,365.9V374.6M1162.6,375.2V380.0M1179.2,373.7V378.0M1185.0,374.2V378.0M1192.4,371.2V377.5M1205.5,368.8V379.5M173.7,408.1V404.8M227.4,410.1V404.8M297.6,410.6V404.3M348.0,432.5V409.2M373.4,420.3V414.1M377.3,421.3V414.5M390.7,418.9V406.2M446.9,405.2V399.9M465.5,391.0V384.3M503.1,392.0V386.7M515.3,399.3V393.1M524.9,398.8V396.0M537.6,397.9V392.6M545.4,397.9V392.6M556.1,401.8V396.0M565.9,403.2V399.9M577.2,399.3V392.1M584.5,398.8V396.0M592.3,402.3V394.0M606.5,410.1V398.9M610.9,406.2V401.8M621.6,398.8V392.1M628.0,401.3V392.1M642.6,403.7V395.0M650.9,413.0V401.8M686.4,405.2V400.4M791.4,404.2V397.9M802.4,418.4V397.0M811.7,414.5V411.6M818.1,399.3V395.0M828.3,400.8V397.5M837.6,406.2V399.9M860.1,390.5V385.2M865.0,388.6V385.2M872.3,417.4V409.7M895.3,385.7V381.3M905.5,386.1V381.8M913.3,385.7V381.8M928.0,389.6V385.2M960.5,399.3V396.0M970.8,402.3V394.0M984.5,408.6V402.8M1009.9,417.4V412.6M1016.7,404.2V396.5M1024.0,408.6V403.8M1036.7,414.5V409.7M1045.5,410.6V404.8M1055.8,410.6V398.9M1061.6,402.3V396.0M1070.4,402.3V398.9M1084.4,404.7V396.0M1100.5,406.2V388.2M1105.4,402.3V388.2M1113.2,406.2V395.0M1141.1,407.1V392.1M1146.4,397.9V392.1M1163.0,400.3V394.5M1170.4,404.2V394.5M1176.7,401.3V393.5" fill="none" stroke="#76b900" stroke-width="2.3" stroke-linecap="round"/><rect x="169.7" y="321.6" width="1038.7" height="471.6" fill="none" stroke="#fff" stroke-width="1.2"/><g stroke="#fff" stroke-width="1.2"><path d="M163.6 792.7H170"/><path d="M163.6 702.7H170"/><path d="M163.6 612.6H170"/><path d="M163.6 522.6H170"/><path d="M163.6 432.6H170"/><path d="M163.6 342.6H170"/><path d="M215.7 793V798.8"/><path d="M388.9 793V798.8"/><path d="M562.2 793V798.8"/><path d="M735.5 793V798.8"/><path d="M908.7 793V798.8"/><path d="M1082.0 793V798.8"/></g><g font-size="15.8"><text x="156" y="798.4" text-anchor="end" textLength="7.8" lengthAdjust="spacingAndGlyphs">0</text><text x="156" y="708.4" text-anchor="end" textLength="24" lengthAdjust="spacingAndGlyphs">100</text><text x="156" y="618.3" text-anchor="end" textLength="24" lengthAdjust="spacingAndGlyphs">200</text><text x="156" y="528.3" text-anchor="end" textLength="24" lengthAdjust="spacingAndGlyphs">300</text><text x="156" y="438.3" text-anchor="end" textLength="24" lengthAdjust="spacingAndGlyphs">400</text><text x="156" y="348.3" text-anchor="end" textLength="24" lengthAdjust="spacingAndGlyphs">500</text><text x="216.1" y="815.9" text-anchor="middle" textLength="23" lengthAdjust="spacingAndGlyphs">900</text><text x="389.3" y="815.9" text-anchor="middle" textLength="32.3" lengthAdjust="spacingAndGlyphs">1000</text><text x="562.6" y="815.9" text-anchor="middle" textLength="32.3" lengthAdjust="spacingAndGlyphs">1100</text><text x="735.9" y="815.9" text-anchor="middle" textLength="32.3" lengthAdjust="spacingAndGlyphs">1200</text><text x="909.1" y="815.9" text-anchor="middle" textLength="32.3" lengthAdjust="spacingAndGlyphs">1300</text><text x="1082.4" y="815.9" text-anchor="middle" textLength="32.3" lengthAdjust="spacingAndGlyphs">1400</text></g><text x="688.5" y="310.5" font-size="19.3" text-anchor="middle" textLength="177.8" lengthAdjust="spacingAndGlyphs">PCI EXPRESS POWER</text><text x="689" y="839.2" font-size="16.8" text-anchor="middle" textLength="60" lengthAdjust="spacingAndGlyphs">Time (s)</text><text transform="translate(120.2 556.8) rotate(-90)" font-size="16.8" text-anchor="middle" textLength="76.8" lengthAdjust="spacingAndGlyphs">Power (W)</text></svg>
<div class="abs" style="left:1349px;top:259px;width:76px;text-align:center;line-height:16px;font-size:12px;white-space:nowrap">Plot Options</div>
<div class="btn" style="left:1349px;top:280px;width:74px;height:23px;line-height:23px;font-size:12px"><i></i><span style="letter-spacing:-0.4px;margin-right:0.4px;top:1px">10 sec</span></div>
<div class="btn" style="left:1349px;top:309px;width:74px;height:23px;line-height:23px;font-size:12px"><i></i><span style="letter-spacing:0.01px;margin-right:-0.01px;top:1px">1 min</span></div>
<div class="btn" style="left:1349px;top:338px;width:74px;height:23px;line-height:23px;font-size:12px"><i></i><span style="letter-spacing:-0.03px;margin-right:0.03px;top:1px">10 min</span></div>
<div class="btn" style="left:1349px;top:367px;width:74px;height:23px;line-height:23px;font-size:12px"><i></i><span style="letter-spacing:-0.0px;margin-right:0.0px;top:1px">1 hour</span></div>
<div class="btn" style="left:1349px;top:396px;width:74px;height:23px;line-height:23px;font-size:12px"><i></i><span style="letter-spacing:-0.04px;margin-right:0.04px;top:1px">Max</span></div>
<div class="cb" style="left:1348px;top:426px"><svg width="13" height="13" viewBox="0 0 13 13" style="display:block"><path d="M3.2 6.6L5.5 8.9L9.9 4.3" fill="none" stroke="#fff" stroke-width="1"/></svg></div><div class="abs" style="left:1366px;top:425px;line-height:16px;white-space:nowrap">Auto scroll</div>
<div class="cb" style="left:1348px;top:447px"><svg width="13" height="13" viewBox="0 0 13 13" style="display:block"><path d="M3.2 6.6L5.5 8.9L9.9 4.3" fill="none" stroke="#fff" stroke-width="1"/></svg></div><div class="abs" style="left:1366px;top:446px;line-height:16px;white-space:nowrap">Auto scale</div>
<div class="gb" style="left:1347px;top:664px;width:79px;height:185px;border-color:#8a8a8a"><span class="lg" style="left:4px;top:-7.5px;font-size:11.8px;letter-spacing:-0.1px">Plot Data</span></div>
<div class="row" style="top:672px;background:#76b900"><b><svg style="position:absolute;left:1px;top:1px" width="10" height="10" viewBox="0 0 10 10"><path d="M1.2 3.6L3.8 6.4L8.6 1.4V3.8L3.8 8.8L1.2 6Z" fill="#000"/></svg></b><span>TOTAL</span></div>
<div class="row" style="top:697px;background:#8dd3c7"><b></b><span>12V 8P1</span></div>
<div class="row" style="top:722px;background:#ffffb3"><b></b><span>12V 8P2</span></div>
<div class="row" style="top:747px;background:#bebada"><b></b><span>12V 8P3</span></div>
<div class="row" style="top:772px;background:#fb8072"><b></b><span>12V PCIE</span></div>
<div class="row" style="top:797px;background:#80b1d3"><b></b><span>3.3V</span></div>
<div class="row" style="top:822px;background:#fdb462"><b></b><span>3.3V AUX</span></div>
<div id="sb"><div style="left:1px;width:1249px;padding-left:9.5px;letter-spacing:-0.34px">PCAT B00 connected, FW v0.8</div><div style="left:1251px;width:74px;padding-left:11.5px;letter-spacing:-0.29px">dt: 100ms</div><div style="left:1326px;width:105px;padding-left:11.5px;letter-spacing:-0.29px">Data Backlog: 0</div></div>
</div></div>
</body></html>
